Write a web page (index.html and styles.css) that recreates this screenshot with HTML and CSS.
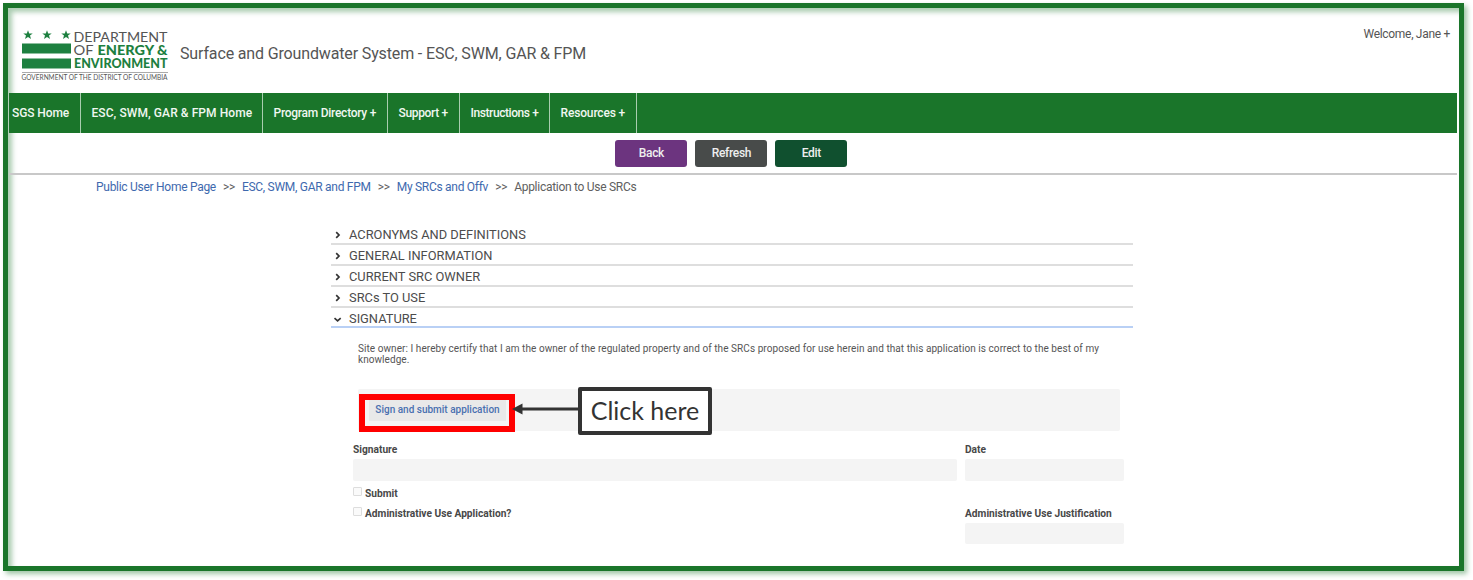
FILE: index.html
```html
<!DOCTYPE html>
<html lang="en">
<head>
<meta charset="utf-8">
<title>Surface and Groundwater System</title>
<link rel="stylesheet" href="styles.css">
</head>
<body>
<div class="frame">
  <header class="header">
    <svg class="logo" width="150" height="56" viewBox="0 0 150 56" role="img" aria-label="Department of Energy &amp; Environment">
      <defs><path id="star" d="M0-4.8 1.2-1.5 4.7-1.5 2 .6 3 4 0 2-3 4-2 .6-4.7-1.5-1.2-1.5Z"/></defs>
      <g fill="#1d8040">
        <use href="#star" x="8" y="8"/><use href="#star" x="27" y="8"/><use href="#star" x="46" y="8"/>
        <rect x="2" y="16.5" width="49" height="10"/><rect x="2" y="31.5" width="49" height="10"/>
      </g>
      <g class="logo-text">
        <text x="53.5" y="15" textLength="94" lengthAdjust="spacingAndGlyphs">DEPARTMENT</text>
        <text x="53.5" y="28" textLength="20" lengthAdjust="spacingAndGlyphs">OF</text>
        <text class="logo-bold" x="77.5" y="28" textLength="70" lengthAdjust="spacingAndGlyphs">ENERGY &amp;</text>
        <text class="logo-bold" x="54" y="41" textLength="93.5" lengthAdjust="spacingAndGlyphs">ENVIRONMENT</text>
      </g>
      <rect x="2" y="45" width="146" height="1" fill="#aaa"/>
      <text class="logo-small" x="1.5" y="53.3" textLength="146" lengthAdjust="spacingAndGlyphs">GOVERNMENT OF THE DISTRICT OF COLUMBIA</text>
    </svg>
    <div class="title">Surface and Groundwater System - ESC, SWM, GAR &amp; FPM</div>
    <div class="welcome">Welcome, Jane +</div>
  </header>
  <nav class="nav">
    <a class="nav-item nav-first">SGS Home</a>
    <a class="nav-item nav-home">ESC, SWM, GAR &amp; FPM Home</a>
    <a class="nav-item nav-program">Program Directory +</a>
    <a class="nav-item nav-support">Support +</a>
    <a class="nav-item nav-instructions">Instructions +</a>
    <a class="nav-item nav-resources">Resources +</a>
  </nav>
  <div class="toolbar">
    <button class="btn btn-back">Back</button>
    <button class="btn btn-refresh">Refresh</button>
    <button class="btn btn-edit">Edit</button>
  </div>
  <div class="crumbs">
    <a>Public User Home Page</a><span class="sep">&gt;&gt;</span><a>ESC, SWM, GAR and FPM</a><span class="sep">&gt;&gt;</span><a>My SRCs and Offv</a><span class="sep">&gt;&gt;</span><span>Application to Use SRCs</span>
  </div>
  <main class="main">
    <div class="section"><svg class="chev" viewBox="0 0 10 10"><path d="M3.2 2.2 6 5 3.2 7.8"/></svg>ACRONYMS AND DEFINITIONS</div>
    <div class="section"><svg class="chev" viewBox="0 0 10 10"><path d="M3.2 2.2 6 5 3.2 7.8"/></svg>GENERAL INFORMATION</div>
    <div class="section"><svg class="chev" viewBox="0 0 10 10"><path d="M3.2 2.2 6 5 3.2 7.8"/></svg>CURRENT SRC OWNER</div>
    <div class="section"><svg class="chev" viewBox="0 0 10 10"><path d="M3.2 2.2 6 5 3.2 7.8"/></svg>SRCs TO USE</div>
    <div class="section section-open"><svg class="chev" viewBox="0 0 10 10"><path d="M1.5 4.2 4.6 6.8 7.7 4.2"/></svg>SIGNATURE</div>
    <p class="certify">Site owner: I hereby certify that I am the owner of the regulated property and of the SRCs proposed for use herein and that this application is correct to the best of my<br>knowledge.</p>
    <div class="sign-panel">
      <div class="highlight"><button class="sign-btn">Sign and submit application</button></div>
      <svg class="arrow" width="68" height="14" viewBox="0 0 68 14"><path d="M8 7H68" stroke="#333" stroke-width="3"/><path d="M0 7 10.5 1.5V12.5Z" fill="#333"/></svg>
      <div class="callout">Click here</div>
    </div>
    <div class="form">
      <div class="field"><label>Signature</label><div class="input"></div></div>
      <div class="field"><label>Date</label><div class="input"></div></div>
      <div class="checks">
        <label class="check"><span class="box"></span>Submit</label>
        <label class="check"><span class="box"></span>Administrative Use Application?</label>
      </div>
      <div class="field field-admin"><label>Administrative Use Justification</label><div class="input"></div></div>
    </div>
  </main>
</div>
</body>
</html>
```
FILE: styles.css
```css
* { box-sizing: border-box; }
body { margin: 0; padding: 3px 0 0 3px; height: 580px; overflow: hidden; background: #fff; font-family: Roboto, "Liberation Sans", sans-serif; color: #555; }
.frame { width: 1461px; height: 568px; border: 5px solid #1a752a; padding: 0 2px 0 1px; background: #fff; box-shadow: 3px 3px 5px rgba(26,117,42,.42), inset 4px 4px 5px rgba(26,117,42,.36); }
.header { height: 85px; display: flex; align-items: flex-start; padding-left: 11px; }
.logo { margin-top: 19px; flex: none; overflow: visible; }
.logo-text { font: 13.6px Lato, sans-serif; fill: #555; }
.logo-bold { font-weight: 900; fill: #1d8040; }
.logo-small { font: 6.6px Lato, sans-serif; fill: #555; }
.title { margin: 35px 0 0 10px; font-size: 16px; line-height: 22px; letter-spacing: -.145px; white-space: nowrap; }
.welcome { margin: 17px 7px 0 auto; font-size: 12px; line-height: 18px; letter-spacing: -.3px; white-space: nowrap; }
.nav { height: 40px; background: #1a752a; display: flex; }
.nav-item { border-right: 1px solid #a9cdaf; color: #f0f7f0; font-size: 12px; font-weight: 500; line-height: 40px; padding-left: 10.5px; white-space: nowrap; }
.nav-first { width: 72px; padding-left: 3px; letter-spacing: -.1px; }
.nav-home { width: 182px; letter-spacing: .08px; }
.nav-program { width: 125px; letter-spacing: -.26px; }
.nav-support { width: 72px; letter-spacing: -.35px; }
.nav-instructions { width: 90px; letter-spacing: -.42px; }
.nav-resources { width: 87px; letter-spacing: -.15px; }
.toolbar { height: 42px; border-bottom: 2px solid #c8c8c8; display: flex; gap: 8px; padding: 7px 0 0 606.4px; }
.btn { width: 72px; height: 27px; border: 0; border-radius: 3px; padding: 0 0 1px; color: #eee; font: 500 12px/26px Roboto, sans-serif; letter-spacing: -.3px; }
.btn-back { background: #6c347f; }
.btn-refresh { background: #484b4a; }
.btn-edit { background: #10502f; }
.crumbs { height: 49px; padding: 4px 0 0 87px; font-size: 12px; letter-spacing: -.28px; line-height: 17px; white-space: nowrap; color: #606060; }
.crumbs a { color: #3e69ae; }
.sep { margin: 0 7px; }
.main { width: 802px; margin-left: 322px; }
.section { height: 20.9px; border-bottom: 2px solid #dedede; display: flex; align-items: center; padding-top: 4px; font-size: 12.85px; line-height: 16px; color: #4c4c4c; }
.section-open { border-color: #b9d0f5; }
.chev { width: 10px; height: 10px; margin: -1px 6px 0 2px; fill: none; stroke: #333; stroke-width: 1.7; }
.certify { margin: 15px 0 0 27px; font-size: 10px; letter-spacing: .065px; line-height: 11px; white-space: nowrap; }
.sign-panel { position: relative; height: 42px; margin: 24px 13px 0 27px; padding: 5px 0 0 1px; background: #f4f4f4; border-radius: 2px; }
.highlight { width: 156px; height: 38px; border: 6px solid #f00; padding: 0 4px; }
.sign-btn { display: block; width: 137px; height: 21px; border: 0; padding: 0 0 2px; background: #e9e9e9; color: #4a70b0; font: 500 10px/19px Roboto, sans-serif; white-space: nowrap; }
.arrow { position: absolute; left: 154px; top: 13px; }
.callout { position: absolute; left: 220px; top: -2px; width: 134px; height: 48px; border: 4px solid #333; border-radius: 2px; background: #fff; color: #333; font: 25px/38px Lato, sans-serif; text-align: center; white-space: nowrap; }
.form { display: grid; grid-template-columns: 604px 159px; column-gap: 8px; margin: 12px 0 0 22px; font-size: 10.2px; font-weight: 700; color: #484848; }
.field label { display: block; height: 16px; line-height: 13px; }
.input { height: 22px; background: #f4f4f4; border-radius: 2px; }
.checks { padding-top: 4.5px; }
.check { display: flex; height: 20.5px; line-height: 15px; }
.box { width: 9px; height: 9px; margin: 1px 3px 0 0; border: 1px solid #ddd; border-radius: 1px; background: #fafafa; }
.field-admin { padding-top: 26px; }
.field-admin .input { height: 21px; }
```
